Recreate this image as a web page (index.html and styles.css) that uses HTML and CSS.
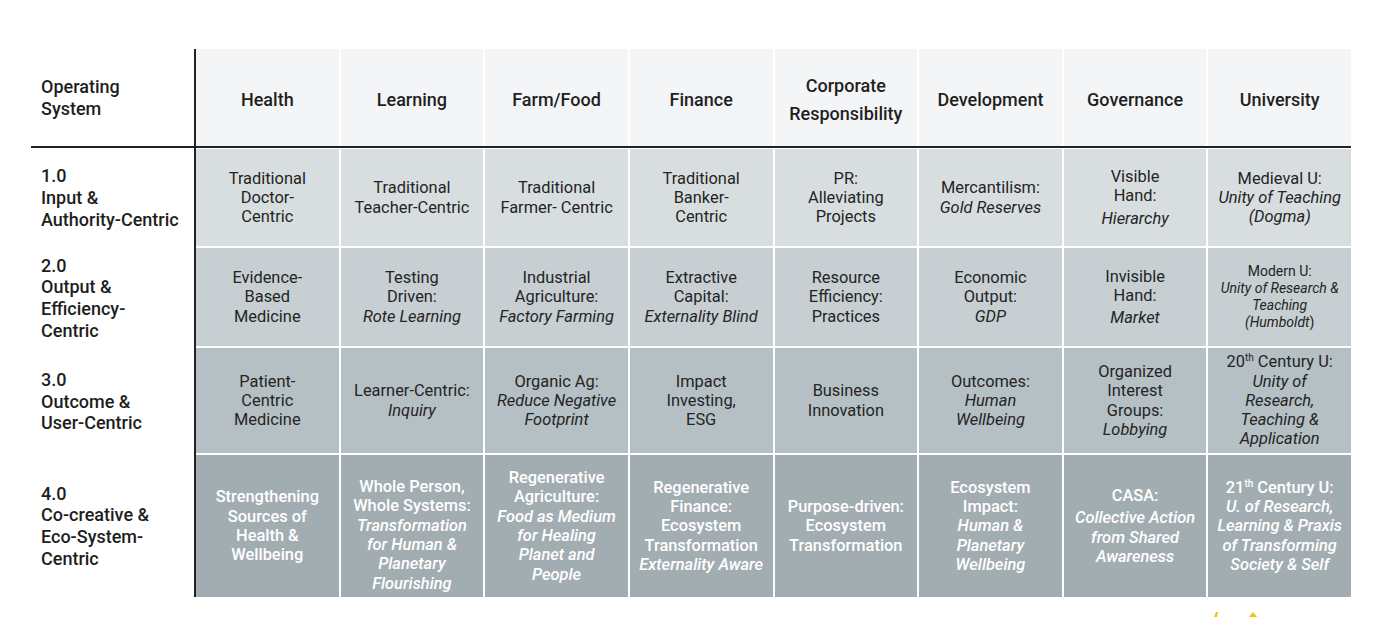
FILE: index.html
```html
<!DOCTYPE html>
<html lang="en">
<head>
<meta charset="utf-8">
<title>Operating Systems</title>
<link rel="stylesheet" href="styles.css">
</head>
<body>
<div class="table">
  <div class="row head">
    <div class="label"><div class="txt">Operating<br>System</div></div>
    <div class="cells">
      <div class="cell"><div class="txt">Health</div></div>
      <div class="cell"><div class="txt">Learning</div></div>
      <div class="cell"><div class="txt">Farm/Food</div></div>
      <div class="cell"><div class="txt">Finance</div></div>
      <div class="cell"><div class="txt">Corporate<br>Responsibility</div></div>
      <div class="cell"><div class="txt">Development</div></div>
      <div class="cell"><div class="txt">Governance</div></div>
      <div class="cell"><div class="txt">University</div></div>
    </div>
  </div>
  <div class="row r1">
    <div class="label"><div class="txt">1.0<br>Input &amp;<br>Authority-Centric</div></div>
    <div class="cells">
      <div class="cell"><div class="txt">Traditional<br>Doctor-<br>Centric</div></div>
      <div class="cell"><div class="txt">Traditional<br>Teacher-Centric</div></div>
      <div class="cell"><div class="txt">Traditional<br>Farmer- Centric</div></div>
      <div class="cell"><div class="txt">Traditional<br>Banker-<br>Centric</div></div>
      <div class="cell"><div class="txt">PR:<br>Alleviating<br>Projects</div></div>
      <div class="cell"><div class="txt">Mercantilism:<br><i>Gold Reserves</i></div></div>
      <div class="cell"><div class="txt">Visible<br>Hand:<br><i class="sep">Hierarchy</i></div></div>
      <div class="cell"><div class="txt">Medieval U:<br><i>Unity of Teaching<br>(Dogma)</i></div></div>
    </div>
  </div>
  <div class="row r2">
    <div class="label"><div class="txt">2.0<br>Output &amp;<br>Efficiency-<br>Centric</div></div>
    <div class="cells">
      <div class="cell"><div class="txt">Evidence-<br>Based<br>Medicine</div></div>
      <div class="cell"><div class="txt">Testing<br>Driven:<br><i>Rote Learning</i></div></div>
      <div class="cell"><div class="txt">Industrial<br>Agriculture:<br><i>Factory Farming</i></div></div>
      <div class="cell"><div class="txt">Extractive<br>Capital:<br><i>Externality Blind</i></div></div>
      <div class="cell"><div class="txt">Resource<br>Efficiency:<br>Practices</div></div>
      <div class="cell"><div class="txt">Economic<br>Output:<br><i>GDP</i></div></div>
      <div class="cell"><div class="txt">Invisible<br>Hand:<br><i class="sep">Market</i></div></div>
      <div class="cell small"><div class="txt">Modern U:<br><i>Unity of Research &amp;<br>Teaching<br>(Humboldt</i>)</div></div>
    </div>
  </div>
  <div class="row r3">
    <div class="label"><div class="txt">3.0<br>Outcome &amp;<br>User-Centric</div></div>
    <div class="cells">
      <div class="cell"><div class="txt">Patient-<br>Centric<br>Medicine</div></div>
      <div class="cell"><div class="txt">Learner-Centric:<br><i>Inquiry</i></div></div>
      <div class="cell"><div class="txt">Organic Ag:<br><i>Reduce Negative<br>Footprint</i></div></div>
      <div class="cell"><div class="txt">Impact<br>Investing,<br>ESG</div></div>
      <div class="cell"><div class="txt">Business<br>Innovation</div></div>
      <div class="cell"><div class="txt">Outcomes:<br><i>Human<br>Wellbeing</i></div></div>
      <div class="cell"><div class="txt">Organized<br>Interest<br>Groups:<br><i>Lobbying</i></div></div>
      <div class="cell"><div class="txt">20<sup>th</sup> Century U:<br><i>Unity of<br>Research,<br>Teaching &amp;<br>Application</i></div></div>
    </div>
  </div>
  <div class="row r4">
    <div class="label"><div class="txt">4.0<br>Co-creative &amp;<br>Eco-System-<br>Centric</div></div>
    <div class="cells">
      <div class="cell"><div class="txt">Strengthening<br>Sources of<br>Health &amp;<br>Wellbeing</div></div>
      <div class="cell shift"><div class="txt">Whole Person,<br>Whole Systems:<br><i>Transformation<br>for Human &amp;<br>Planetary<br>Flourishing</i></div></div>
      <div class="cell"><div class="txt">Regenerative<br>Agriculture:<br><i>Food as Medium<br>for Healing<br>Planet and<br>People</i></div></div>
      <div class="cell"><div class="txt">Regenerative<br>Finance:<br>Ecosystem<br>Transformation<br><i>Externality Aware</i></div></div>
      <div class="cell"><div class="txt">Purpose-driven:<br>Ecosystem<br>Transformation</div></div>
      <div class="cell"><div class="txt">Ecosystem<br>Impact:<br><i>Human &amp;<br>Planetary<br>Wellbeing</i></div></div>
      <div class="cell"><div class="txt">CASA:<br><i class="sep">Collective Action<br>from Shared<br>Awareness</i></div></div>
      <div class="cell"><div class="txt">21<sup>th</sup> Century U:<br><i>U. of Research,<br>Learning &amp; Praxis<br>of Transforming<br>Society &amp; Self</i></div></div>
    </div>
  </div>
  <div class="foot">
    <svg class="logo" width="60" height="5" viewBox="0 0 60 5">
      <path d="M9 5 L11 0 L13 0 L12 5 Z" fill="#f6c300"/>
      <path d="M44 5 L48 0 L52 5 Z" fill="#f6c300"/>
    </svg>
  </div>
</div>
</body>
</html>
```

FILE: styles.css
```css
html, body {
  margin: 0;
  padding: 0;
  background: #ffffff;
  overflow: hidden;
}

body {
  font-family: Roboto, "Noto Sans", Arial, sans-serif;
  color: #222222;
}

.table {
  margin: 49px 0 0 31px;
  width: 1320px;
  display: flex;
  flex-direction: column;
}

.row {
  display: grid;
  grid-template-columns: 163px minmax(0, 1fr);
}

.label {
  display: flex;
  align-items: center;
  padding-left: 10px;
  font-size: 18px;
  font-weight: 500;
  line-height: 21.7px;
  color: #1e1e1e;
}

.cells {
  border-left: 2px solid #222222;
  display: grid;
  grid-template-columns: repeat(8, minmax(0, 1fr));
  column-gap: 2px;
}

.cell {
  display: flex;
  align-items: center;
  justify-content: center;
  text-align: center;
  font-size: 16.4px;
  line-height: 19.3px;
  color: #242424;
  white-space: nowrap;
  box-sizing: border-box;
}

.cell i {
  font-style: italic;
}

.cell i.sep {
  display: inline-block;
  margin-top: 3px;
}

.cell sup {
  font-size: 10px;
  line-height: 0;
  vertical-align: 6px;
}

.head {
  border-bottom: 2px solid #222222;
}

.head .cells {
  height: 97px;
}

.head .cell {
  background: #f4f5f7;
  font-size: 18px;
  font-weight: 500;
  line-height: 28px;
  color: #1f1f1f;
  padding-top: 4px;
}

.r1 .cells {
  padding-top: 1px;
  padding-bottom: 2px;
}

.r1 .cell {
  height: 97px;
  background: #d8dee0;
}

.r2 .cells {
  padding-bottom: 2px;
}

.r2 .cell {
  height: 98px;
  background: #c7cfd2;
}

.r2 .cell.small {
  font-size: 14px;
  line-height: 17px;
}

.r3 .cells {
  padding-bottom: 2px;
}

.r3 .cell {
  height: 105px;
  background: #b5c0c4;
}

.r4 .cell {
  height: 142px;
  background: #a2adb2;
  color: #ffffff;
  font-weight: 500;
}

.r4 .cell.shift {
  padding-top: 18px;
}

.foot {
  display: flex;
  justify-content: flex-end;
  padding-right: 86px;
  margin-top: 15px;
  height: 5px;
  overflow: hidden;
}

.logo {
  display: block;
}
```
